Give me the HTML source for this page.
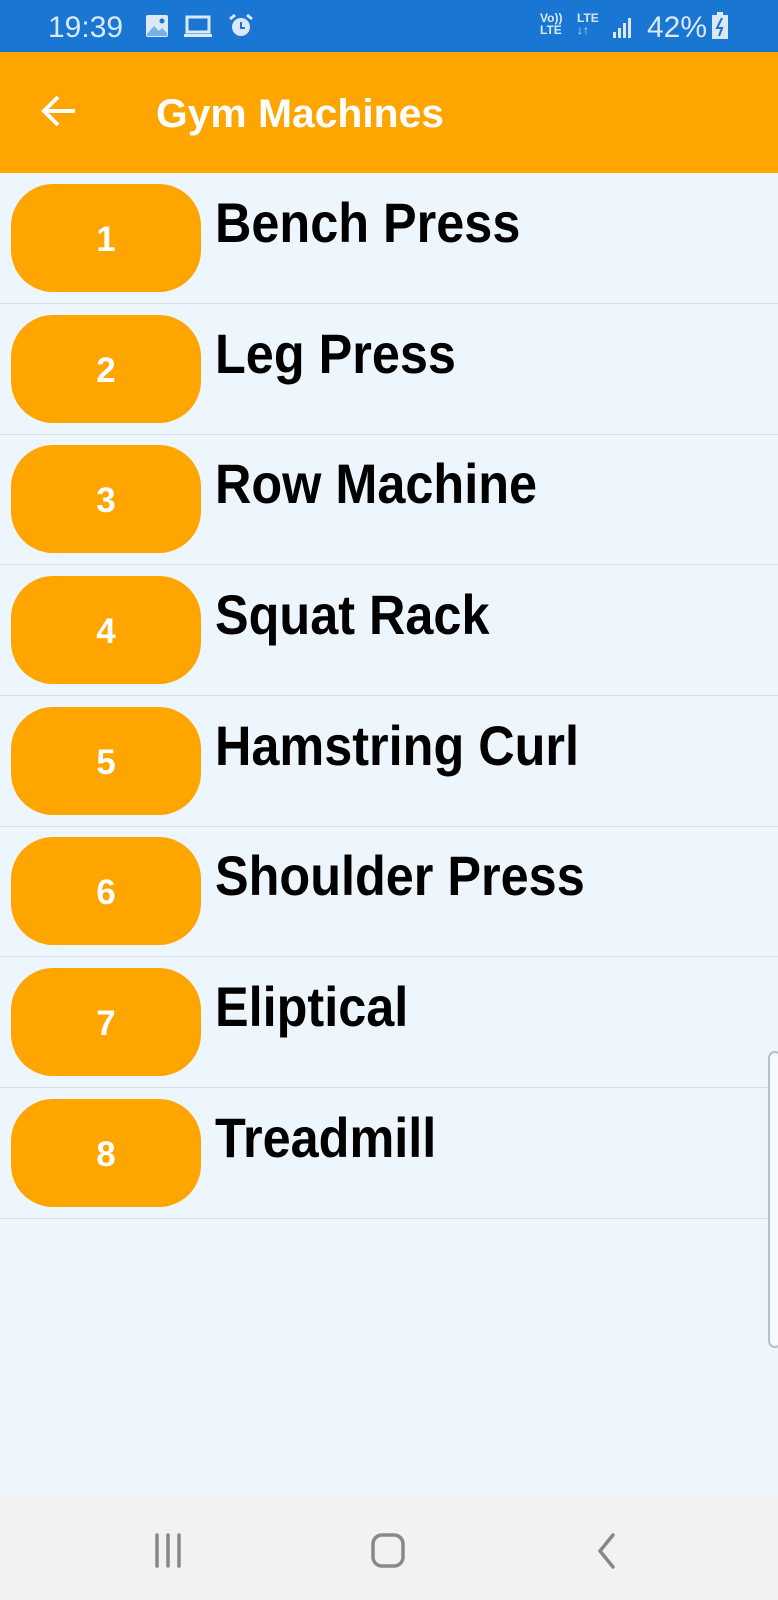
<!DOCTYPE html>
<html><head><meta charset="utf-8"><style>
*{margin:0;padding:0;box-sizing:border-box}
body{width:778px;height:1600px;overflow:hidden;background:#eef6fd;font-family:"Liberation Sans",sans-serif;position:relative}
.sb{position:absolute;left:0;top:0;width:778px;height:52px;background:#1976d2;color:#dbe8f7}
.hd{position:absolute;left:0;top:52px;width:778px;height:121px;background:#ffa500;color:#fff}
.row{position:absolute;left:0;width:778px;height:131px;border-bottom:1px solid #d6dde4}
.pill{position:absolute;left:11px;top:11px;width:190px;height:108px;border-radius:42px;background:#ffa500;color:#fff;font-weight:bold;font-size:35px;text-align:center;line-height:112px}
.t{position:absolute;left:215px;top:19px;font-weight:bold;font-size:56px;line-height:62px;color:#000;transform:scaleX(0.9);transform-origin:left;white-space:nowrap}
.nav{position:absolute;left:0;top:1496px;width:778px;height:104px;background:#f2f2f2}
</style></head><body>
<div class="sb">
<div style="position:absolute;left:48px;top:11px;font-size:30px;">19:39</div>
<svg style="position:absolute;left:145px;top:14px" width="24" height="24" viewBox="0 0 24 24"><rect x="1" y="1" width="22" height="22" rx="2" fill="#dbe8f7"/><path d="M2 20 L9 12 L14 17 L17 14 L22 19 V22 H2Z" fill="#1976d2" opacity=".5"/><circle cx="17" cy="7" r="2.5" fill="#1976d2"/></svg>
<svg style="position:absolute;left:183px;top:15px" width="30" height="24" viewBox="0 0 30 24"><rect x="4" y="2" width="22" height="15" fill="none" stroke="#dbe8f7" stroke-width="3"/><rect x="1" y="19" width="28" height="3" fill="#dbe8f7"/></svg>
<svg style="position:absolute;left:228px;top:13px" width="26" height="26" viewBox="0 0 26 26"><circle cx="13" cy="14" r="9" fill="#dbe8f7"/><path d="M13 9v6h4" stroke="#1976d2" stroke-width="2" fill="none"/><path d="M2 6l5-4M24 6l-5-4" stroke="#dbe8f7" stroke-width="3"/></svg>
<div style="position:absolute;left:540px;top:12px;font-size:12px;line-height:12px;font-weight:bold">Vo))<br>LTE</div>
<div style="position:absolute;left:577px;top:12px;font-size:12px;line-height:12px;font-weight:bold">LTE<br>↓↑</div>
<svg style="position:absolute;left:612px;top:16px" width="24" height="24" viewBox="0 0 24 24"><rect x="1" y="16" width="3" height="6" fill="#dbe8f7"/><rect x="6" y="12" width="3" height="10" fill="#dbe8f7"/><rect x="11" y="7" width="3" height="15" fill="#dbe8f7"/><rect x="16" y="2" width="3" height="20" fill="#dbe8f7"/></svg>
<div style="position:absolute;left:647px;top:11px;font-size:30px">42%</div>
<svg style="position:absolute;left:711px;top:12px" width="18" height="28" viewBox="0 0 18 28"><rect x="6" y="0" width="6" height="3" fill="#dbe8f7"/><rect x="1" y="3" width="16" height="24" fill="#dbe8f7"/><path d="M11 6L6 16h5l-3 8" stroke="#1976d2" stroke-width="2" fill="none"/></svg>
</div>
<div class="hd">
<svg style="position:absolute;left:41px;top:42px" width="36" height="34" viewBox="0 0 36 34"><path d="M34 17H4M17 3L3 17l14 14" stroke="#fff" stroke-width="4" fill="none"/></svg>
<div style="position:absolute;left:156px;top:40px;font-size:40px;font-weight:bold;transform:scaleX(1.02);transform-origin:left">Gym Machines</div>
</div>
<div class="row" style="top:173px"><div class="pill">1</div><div class="t">Bench Press</div></div>
<div class="row" style="top:304px"><div class="pill">2</div><div class="t">Leg Press</div></div>
<div class="row" style="top:434px"><div class="pill">3</div><div class="t">Row Machine</div></div>
<div class="row" style="top:565px"><div class="pill">4</div><div class="t">Squat Rack</div></div>
<div class="row" style="top:696px"><div class="pill">5</div><div class="t">Hamstring Curl</div></div>
<div class="row" style="top:826px"><div class="pill">6</div><div class="t">Shoulder Press</div></div>
<div class="row" style="top:957px"><div class="pill">7</div><div class="t">Eliptical</div></div>
<div class="row" style="top:1088px"><div class="pill">8</div><div class="t">Treadmill</div></div>
<div style="position:absolute;left:768px;top:1051px;width:14px;height:297px;border:2px solid #b8c0c8;border-radius:10px;background:#f6fafd"></div>
<div class="nav">
<svg style="position:absolute;left:154px;top:37px" width="34" height="36" viewBox="0 0 34 36"><path d="M3 2v31M14 2v31M25 2v31" stroke="#888" stroke-width="3.5" stroke-linecap="round"/></svg>
<svg style="position:absolute;left:370px;top:36px" width="38" height="38" viewBox="0 0 38 38"><rect x="3" y="3" width="30" height="31" rx="9" fill="none" stroke="#888" stroke-width="3.5"/></svg>
<svg style="position:absolute;left:595px;top:36px" width="24" height="38" viewBox="0 0 24 38"><path d="M18 3L5 19l13 16" stroke="#888" stroke-width="3.5" fill="none" stroke-linecap="round"/></svg>
</div>
</body></html>
